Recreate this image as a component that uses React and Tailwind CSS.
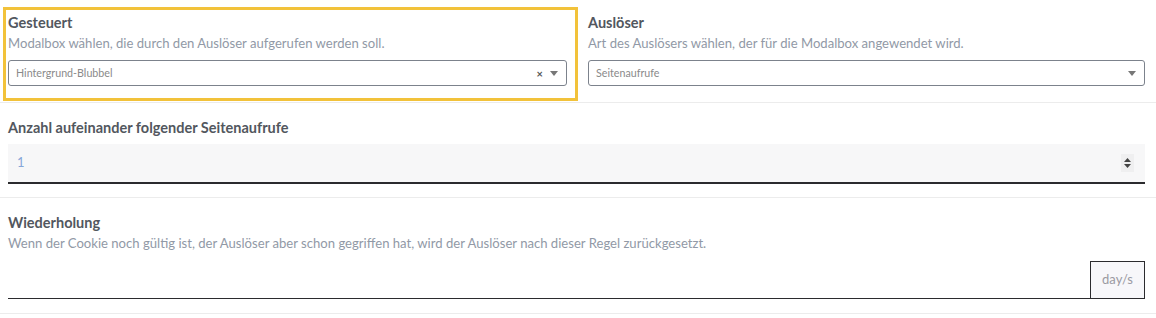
import { useState } from 'react';

const font = { fontFamily: '"Source Sans Pro", Lato, "Open Sans", sans-serif' };

function Label({ children }) {
  return <div className="text-[14.5px] font-bold leading-[18px] text-[#52575e]">{children}</div>;
}

function Help({ children }) {
  return <div className="mt-[2px] text-[13.1px] leading-[18px] text-[#9199a6]">{children}</div>;
}

function Caret() {
  return (
    <svg width="8" height="5" viewBox="0 0 8 5" className="fill-[#777]">
      <path d="M0 0h8L4 5z" />
    </svg>
  );
}

function Select({ value, clearable }) {
  return (
    <div className="mt-[8px] flex h-[26px] items-center rounded-[3px] border border-[#7c828c] pl-[7px] pr-[8px]">
      <span className="flex-1 text-[10.7px] text-[#8a8a8a]">{value}</span>
      {clearable && <span className="mr-[7px] text-[11px] font-bold leading-none text-[#555]">×</span>}
      <Caret />
    </div>
  );
}

export default function App() {
  const [count, setCount] = useState('1');

  return (
    <div className="w-[1156px] bg-white" style={font}>
      {/* row 1 */}
      <div className="flex border-b border-[#ececec] pt-[7px] pb-[1px]">
        <div className="w-[575px] ml-[3px] border-[3px] border-[#f2c23a] pl-[2px] pr-[8px] pt-[4px] pb-[12px]">
          <Label>Gesteuert</Label>
          <Help>Modalbox wählen, die durch den Auslöser aufgerufen werden soll.</Help>
          <Select value="Hintergrund-Blubbel" clearable />
        </div>
        <div className="flex-1 pl-[10px] pr-[11px] pt-[7px]">
          <Label>Auslöser</Label>
          <Help>Art des Auslösers wählen, der für die Modalbox angewendet wird.</Help>
          <Select value="Seitenaufrufe" />
        </div>
      </div>

      {/* row 2 */}
      <div className="border-b border-[#ececec] px-[8px] pt-[16px] pb-[13px]">
        <Label>Anzahl aufeinander folgender Seitenaufrufe</Label>
        <div className="mt-[7px] mr-[3px] flex h-[40px] items-center border-b-2 border-[#2b2b2e] bg-[#f7f7f8] pl-[9px] pr-[11px]">
          <input
            value={count}
            onChange={(e) => setCount(e.target.value)}
            className="flex-1 bg-transparent text-[13px] text-[#86a6d8] outline-none"
            style={font}
          />
          <div className="flex h-[18px] w-[13px] flex-col items-center justify-center gap-[2px] bg-[#efeff0]">
            <svg width="7" height="4" viewBox="0 0 7 4" className="fill-[#444]"><path d="M3.5 0L7 4H0z" /></svg>
            <svg width="7" height="4" viewBox="0 0 7 4" className="fill-[#444]"><path d="M0 0h7L3.5 4z" /></svg>
          </div>
        </div>
      </div>

      {/* row 3 */}
      <div className="border-b border-[#ececec] px-[8px] pt-[16px] pb-[14px]">
        <Label>Wiederholung</Label>
        <Help>Wenn der Cookie noch gültig ist, der Auslöser aber schon gegriffen hat, wird der Auslöser nach dieser Regel zurückgesetzt.</Help>
        <div className="mt-[9px] mr-[3px] flex h-[38px]">
          <div className="flex-1 border-b border-[#2b2b2e]" />
          <div className="flex w-[55px] items-center justify-center border border-[#2b2b2e] bg-[#f7f7fa] text-[13px] text-[#9a9aa2]">
            day/s
          </div>
        </div>
      </div>
    </div>
  );
}
